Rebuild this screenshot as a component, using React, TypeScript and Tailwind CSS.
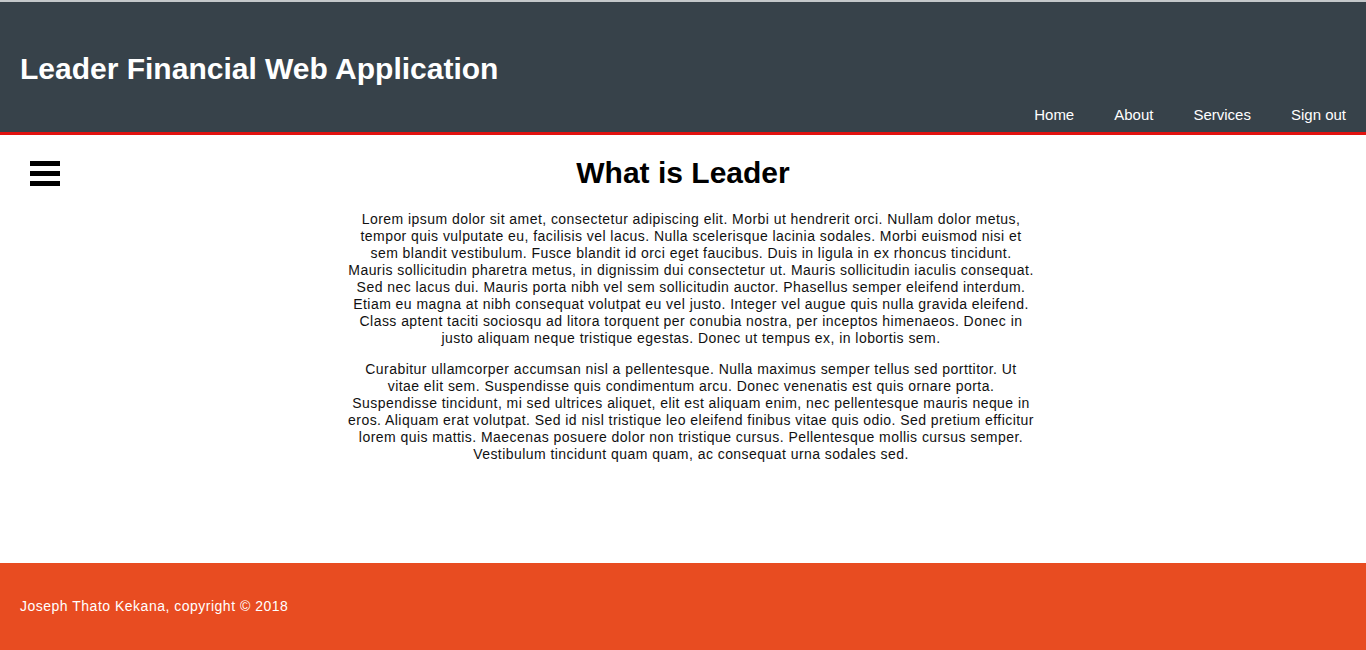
import React from 'react';

const navLinks = ['Home', 'About', 'Services', 'Sign out'];

const para1 = [
  'Lorem ipsum dolor sit amet, consectetur adipiscing elit. Morbi ut hendrerit orci. Nullam dolor metus,',
  'tempor quis vulputate eu, facilisis vel lacus. Nulla scelerisque lacinia sodales. Morbi euismod nisi et',
  'sem blandit vestibulum. Fusce blandit id orci eget faucibus. Duis in ligula in ex rhoncus tincidunt.',
  'Mauris sollicitudin pharetra metus, in dignissim dui consectetur ut. Mauris sollicitudin iaculis consequat.',
  'Sed nec lacus dui. Mauris porta nibh vel sem sollicitudin auctor. Phasellus semper eleifend interdum.',
  'Etiam eu magna at nibh consequat volutpat eu vel justo. Integer vel augue quis nulla gravida eleifend.',
  'Class aptent taciti sociosqu ad litora torquent per conubia nostra, per inceptos himenaeos. Donec in',
  'justo aliquam neque tristique egestas. Donec ut tempus ex, in lobortis sem.',
];

const para2 = [
  'Curabitur ullamcorper accumsan nisl a pellentesque. Nulla maximus semper tellus sed porttitor. Ut',
  'vitae elit sem. Suspendisse quis condimentum arcu. Donec venenatis est quis ornare porta.',
  'Suspendisse tincidunt, mi sed ultrices aliquet, elit est aliquam enim, nec pellentesque mauris neque in',
  'eros. Aliquam erat volutpat. Sed id nisl tristique leo eleifend finibus vitae quis odio. Sed pretium efficitur',
  'lorem quis mattis. Maecenas posuere dolor non tristique cursus. Pellentesque mollis cursus semper.',
  'Vestibulum tincidunt quam quam, ac consequat urna sodales sed.',
];

function Lines({ lines }: { lines: string[] }) {
  return (
    <>
      {lines.map((line, i) => (
        <React.Fragment key={i}>
          {line}
          {i < lines.length - 1 && <br />}
        </React.Fragment>
      ))}
    </>
  );
}

export default function App() {
  return (
    <div className="min-h-[650px] flex flex-col font-['Liberation_Sans',Arial,sans-serif] bg-white">
      {/* header */}
      <header className="border-t-2 border-[#c4c8ca] bg-[#37424a] border-b-[3px] border-b-[#e1120f]">
        <div className="h-[130px] px-5 flex flex-col">
          <h1 className="pt-[49px] text-[30px] leading-[36px] font-bold text-white">
            Leader Financial Web Application
          </h1>
          <nav className="mt-auto pb-[9px] flex justify-end gap-10">
            {navLinks.map((link) => (
              <a key={link} href="#" className="text-[15px] leading-[17px] text-white">
                {link}
              </a>
            ))}
          </nav>
        </div>
      </header>

      {/* content */}
      <main className="relative h-[428px]">
        <button className="absolute left-[30px] top-[26px] flex flex-col gap-[5px]">
          <span className="block w-[30px] h-[5px] bg-black" />
          <span className="block w-[30px] h-[5px] bg-black" />
          <span className="block w-[30px] h-[5px] bg-black" />
        </button>
        <h2 className="pt-[20px] text-center text-[30px] leading-[36px] font-bold text-black">What is Leader</h2>
        <div className="flex justify-center mt-[20px]">
          <div className="w-[740px] ml-[16px] text-center text-[14px] leading-[17px] tracking-[0.45px] text-[#111]">
            <p>
              <Lines lines={para1} />
            </p>
            <p className="mt-[14px]">
              <Lines lines={para2} />
            </p>
          </div>
        </div>
      </main>

      {/* footer */}
      <footer className="h-[87px] bg-[#e84c21] px-5 flex items-center">
        <p className="text-[14px] leading-[17px] tracking-[0.5px] text-white">Joseph Thato Kekana, copyright © 2018</p>
      </footer>
    </div>
  );
}
